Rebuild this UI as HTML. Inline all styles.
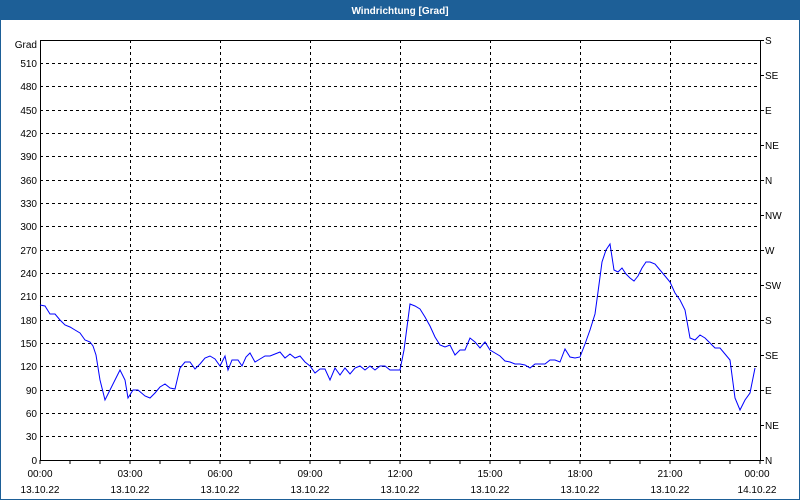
<!DOCTYPE html>
<html><head><meta charset="utf-8"><style>
html,body{margin:0;padding:0;width:800px;height:500px;overflow:hidden;background:#fff;}
</style></head><body>
<svg width="800" height="500" xmlns="http://www.w3.org/2000/svg" font-family="Liberation Sans, sans-serif" font-size="10">
<rect x="0" y="0" width="800" height="500" fill="#fff"/>
<rect x="0.5" y="0.5" width="799" height="499" fill="none" stroke="#1d5f97"/>
<rect x="0" y="0" width="800" height="20" fill="#1d5f97"/>
<text x="400" y="14" text-anchor="middle" fill="#fff" font-weight="bold" font-size="10">Windrichtung [Grad]</text>
<g stroke="#000" stroke-dasharray="3,3" stroke-width="1">
<line x1="40" y1="63.5" x2="760" y2="63.5"/><line x1="40" y1="86.5" x2="760" y2="86.5"/><line x1="40" y1="110.5" x2="760" y2="110.5"/><line x1="40" y1="133.5" x2="760" y2="133.5"/><line x1="40" y1="156.5" x2="760" y2="156.5"/><line x1="40" y1="180.5" x2="760" y2="180.5"/><line x1="40" y1="203.5" x2="760" y2="203.5"/><line x1="40" y1="226.5" x2="760" y2="226.5"/><line x1="40" y1="250.5" x2="760" y2="250.5"/><line x1="40" y1="273.5" x2="760" y2="273.5"/><line x1="40" y1="296.5" x2="760" y2="296.5"/><line x1="40" y1="320.5" x2="760" y2="320.5"/><line x1="40" y1="343.5" x2="760" y2="343.5"/><line x1="40" y1="366.5" x2="760" y2="366.5"/><line x1="40" y1="390.5" x2="760" y2="390.5"/><line x1="40" y1="413.5" x2="760" y2="413.5"/><line x1="40" y1="436.5" x2="760" y2="436.5"/>
<line x1="130.5" y1="40" x2="130.5" y2="460"/><line x1="220.5" y1="40" x2="220.5" y2="460"/><line x1="310.5" y1="40" x2="310.5" y2="460"/><line x1="400.5" y1="40" x2="400.5" y2="460"/><line x1="490.5" y1="40" x2="490.5" y2="460"/><line x1="580.5" y1="40" x2="580.5" y2="460"/><line x1="670.5" y1="40" x2="670.5" y2="460"/>
</g>
<g stroke="#000" stroke-width="1">
<line x1="40.5" y1="40" x2="40.5" y2="461"/><line x1="760.5" y1="40" x2="760.5" y2="461"/><line x1="40" y1="40.5" x2="761" y2="40.5"/><line x1="40" y1="460.5" x2="761" y2="460.5"/>
<path d="M70 460v4M100 460v4M130 460v4M160 460v4M190 460v4M220 460v4M250 460v4M280 460v4M310 460v4M340 460v4M370 460v4M400 460v4M430 460v4M460 460v4M490 460v4M520 460v4M550 460v4M580 460v4M610 460v4M640 460v4M670 460v4M700 460v4M730 460v4M40 460v4M760 460v4"/>
<path d="M760 40.5h4M760 75.5h4M760 110.5h4M760 145.5h4M760 180.5h4M760 215.5h4M760 250.5h4M760 285.5h4M760 320.5h4M760 355.5h4M760 390.5h4M760 425.5h4M760 460.5h4"/>
</g>
<g text-anchor="end" fill="#000">
<text x="37" y="48">Grad</text>
<text x="37" y="67">510</text><text x="37" y="90">480</text><text x="37" y="114">450</text><text x="37" y="137">420</text><text x="37" y="160">390</text><text x="37" y="184">360</text><text x="37" y="207">330</text><text x="37" y="230">300</text><text x="37" y="254">270</text><text x="37" y="277">240</text><text x="37" y="300">210</text><text x="37" y="324">180</text><text x="37" y="347">150</text><text x="37" y="370">120</text><text x="37" y="394">90</text><text x="37" y="417">60</text><text x="37" y="440">30</text><text x="37" y="464">0</text>
</g>
<g fill="#000">
<text x="765" y="44">S</text><text x="765" y="79">SE</text><text x="765" y="114">E</text><text x="765" y="149">NE</text><text x="765" y="184">N</text><text x="765" y="219">NW</text><text x="765" y="254">W</text><text x="765" y="289">SW</text><text x="765" y="324">S</text><text x="765" y="359">SE</text><text x="765" y="394">E</text><text x="765" y="429">NE</text><text x="765" y="464">N</text>
</g>
<g text-anchor="middle" fill="#000">
<text x="40" y="477">00:00</text><text x="40" y="493">13.10.22</text>
<text x="130" y="477">03:00</text><text x="130" y="493">13.10.22</text>
<text x="220" y="477">06:00</text><text x="220" y="493">13.10.22</text>
<text x="310" y="477">09:00</text><text x="310" y="493">13.10.22</text>
<text x="400" y="477">12:00</text><text x="400" y="493">13.10.22</text>
<text x="490" y="477">15:00</text><text x="490" y="493">13.10.22</text>
<text x="580" y="477">18:00</text><text x="580" y="493">13.10.22</text>
<text x="670" y="477">21:00</text><text x="670" y="493">13.10.22</text>
<text x="757" y="477">00:00</text><text x="757" y="493">14.10.22</text>
</g>
<polyline fill="none" stroke="#0000ff" stroke-width="1" points="40,305 45,306 50,314 55,314 60,320 65,325 70,327 75,330 80,333 85,340 90,342 93,346 96,355 100,380 105,400 110,390 115,380 120,370 125,380 128,398 133,390 138,390 145,396 150,398 155,393 160,387 165,384 170,388 175,389 180,368 185,362 190,362 195,369 200,364 205,358 210,356 215,359 220,366 225,356 228,370 232,360 238,360 242,366 246,357 250,353 255,362 260,359 265,356 270,356 275,354 280,352 285,358 290,354 295,358 300,356 305,362 310,366 315,373 320,369 325,369 330,380 335,368 340,375 345,368 350,374 355,368 360,366 365,370 370,366 375,370 380,366 385,366 390,370 395,370 400,370 404,350 410,304 415,306 420,309 425,317 430,326 435,337 440,345 445,347 450,345 455,355 460,350 465,350 470,338 475,342 480,348 485,342 490,350 495,353 500,356 505,361 510,362 515,364 520,364 525,365 530,368 535,364 540,364 545,364 550,360 555,360 560,362 565,349 570,357 575,358 580,357 585,344 590,330 595,314 598,292 602,262 606,250 610,244 614,270 618,272 622,268 626,274 630,278 634,281 638,276 642,268 646,262 650,262 655,264 660,270 665,276 670,282 675,293 680,300 685,310 690,338 695,340 700,335 705,338 710,343 715,348 720,348 725,354 730,360 735,398 740,410 745,400 750,393 755,368"/>
</svg>
</body></html>
